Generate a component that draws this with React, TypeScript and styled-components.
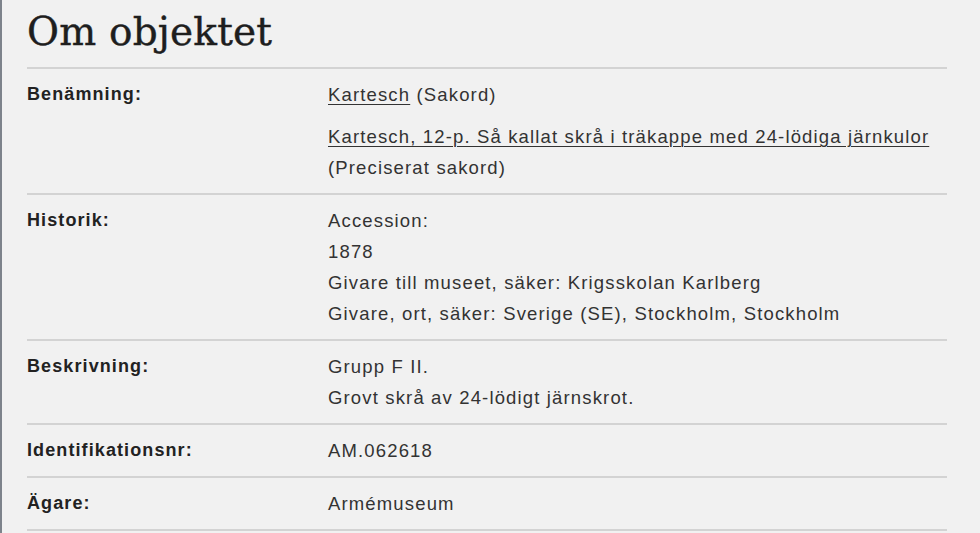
import React from "react";
import styled, { createGlobalStyle } from "styled-components";

const GlobalStyle = createGlobalStyle`
  html, body {
    margin: 0;
    padding: 0;
    background: #f1f1f1;
  }
  body {
    font-family: "Liberation Sans", Arial, sans-serif;
  }
`;

const Page = styled.div`
  box-sizing: border-box;
  min-height: 533px;
  width: 980px;
  border-left: 2px solid #7d838b;
  padding: 8px 0 0 25px;
  background: #f1f1f1;
`;

const Section = styled.section`
  width: 920px;
`;

const Heading = styled.h2`
  margin: 0 0 11px 0;
  font-family: "DejaVu Serif", "Liberation Serif", serif;
  font-weight: normal;
  font-size: 39px;
  line-height: 48px;
  color: #1e1e1e;
  letter-spacing: 0.2px;
  -webkit-text-stroke: 0.4px #1e1e1e;
`;

const List = styled.dl`
  margin: 0;
  border-top: 2px solid #d3d3d3;
`;

const Row = styled.div`
  display: grid;
  grid-template-columns: 301px 1fr;
  padding: 10px 0 10px;
  border-bottom: 2px solid #d3d3d3;
`;

const Label = styled.dt`
  margin: 0;
  font-weight: bold;
  font-size: 18px;
  line-height: 31px;
  letter-spacing: 1.1px;
  color: #222;
`;

const Value = styled.dd`
  margin: 0;
  display: flex;
  flex-direction: column;
  gap: 11px;
  font-size: 18.5px;
  line-height: 31px;
  letter-spacing: 1.15px;
  color: #333;
`;

const Para = styled.div``;

const Link = styled.a`
  color: #333;
  text-decoration: underline;
  text-decoration-thickness: 1px;
  text-underline-offset: 3px;
`;

export default function App() {
  return (
    <>
      <GlobalStyle />
      <Page>
        <Section>
          <Heading>Om objektet</Heading>
          <List>
            <Row>
              <Label>Benämning:</Label>
              <Value>
                <Para>
                  <Link href="#">Kartesch</Link> (Sakord)
                </Para>
                <Para>
                  <Link href="#">
                    Kartesch, 12-p. Så kallat skrå i träkappe med 24-lödiga järnkulor
                  </Link>
                  <br />
                  (Preciserat sakord)
                </Para>
              </Value>
            </Row>
            <Row>
              <Label>Historik:</Label>
              <Value>
                <Para>
                  Accession:
                  <br />
                  1878
                  <br />
                  Givare till museet, säker: Krigsskolan Karlberg
                  <br />
                  Givare, ort, säker: Sverige (SE), Stockholm, Stockholm
                </Para>
              </Value>
            </Row>
            <Row>
              <Label>Beskrivning:</Label>
              <Value>
                <Para>
                  Grupp F II.
                  <br />
                  Grovt skrå av 24-lödigt järnskrot.
                </Para>
              </Value>
            </Row>
            <Row>
              <Label>Identifikationsnr:</Label>
              <Value>
                <Para>AM.062618</Para>
              </Value>
            </Row>
            <Row>
              <Label>Ägare:</Label>
              <Value>
                <Para>Armémuseum</Para>
              </Value>
            </Row>
          </List>
        </Section>
      </Page>
    </>
  );
}
